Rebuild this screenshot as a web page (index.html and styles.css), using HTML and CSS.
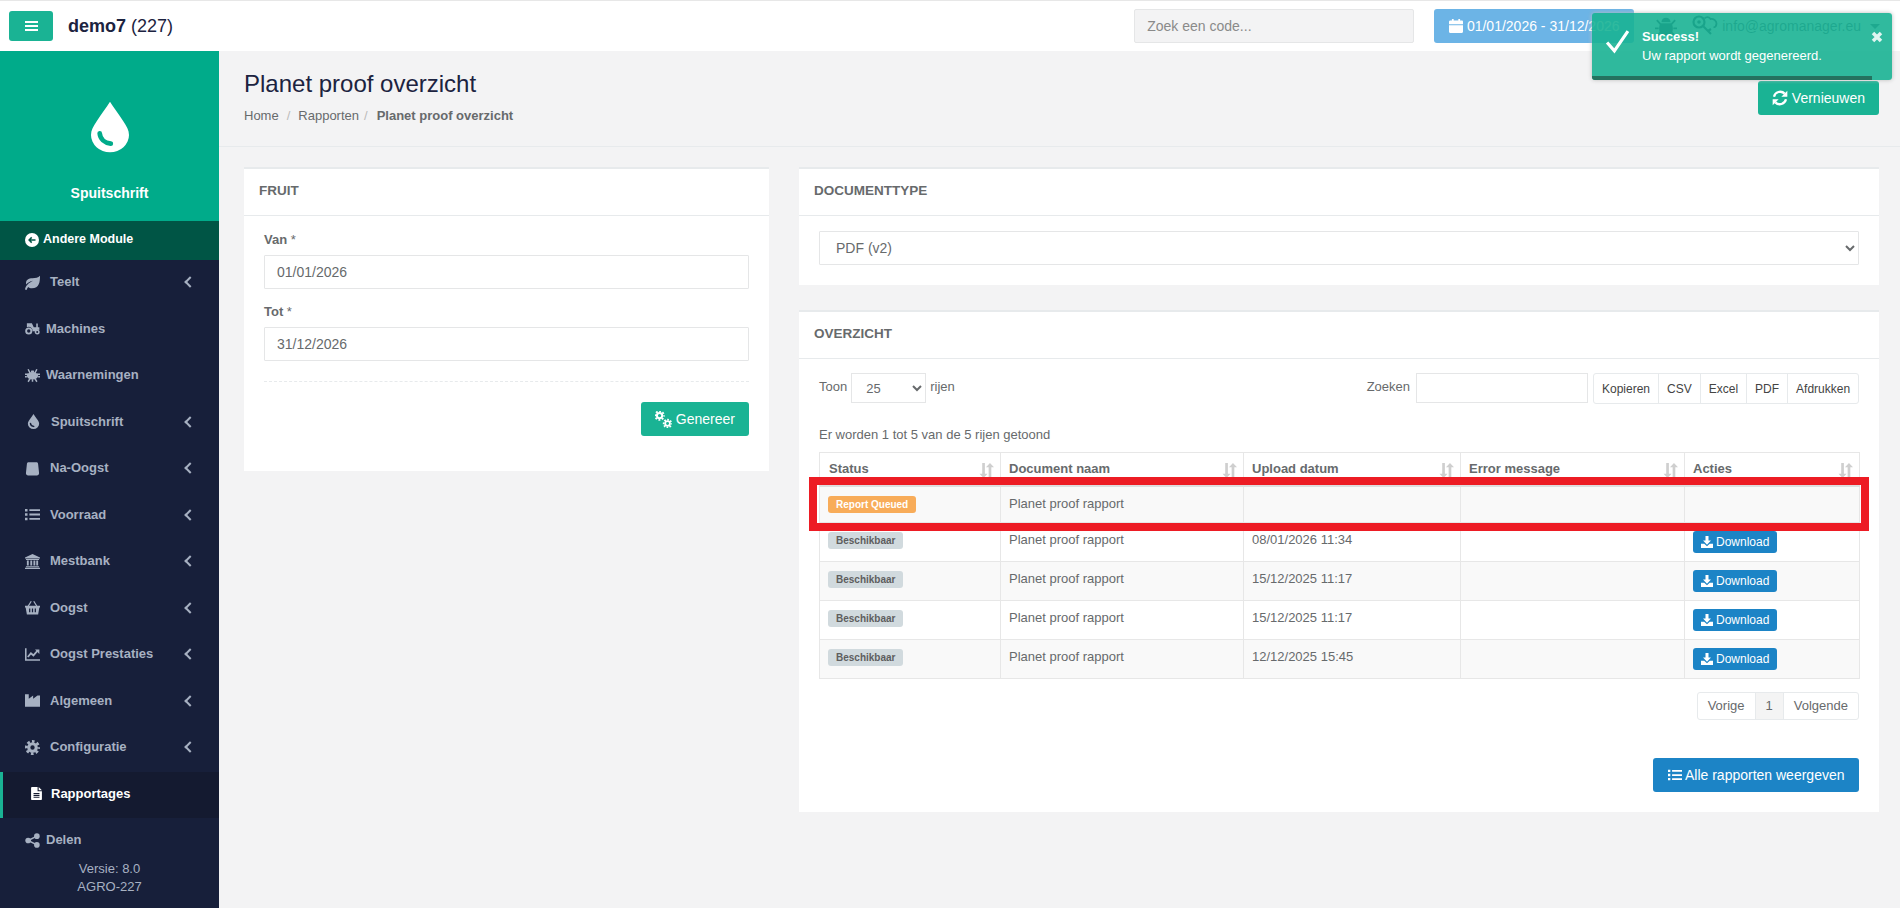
FILE: index.html
```html
<!DOCTYPE html>
<html>
  <head>
    <title>Planet proof overzicht</title>
    <link rel="stylesheet" href="styles.css">
  </head>
  <body>
    <svg class="icon-defs" xmlns="http://www.w3.org/2000/svg">
      <symbol id="i-drop" viewBox="0 0 24 32">
        <path fill="currentColor" d="M12 0c2 3.500 5.500 7.500 8.500 12.500 2 3 3.500 5.500 3.500 8.500a12 11 0 0 1-24 0c0-3 1.500-5.500 3.500-8.500C6.500 7.500 10 3.500 12 0z"/>
        <path fill="none" stroke="var(--cut)" stroke-width="3" stroke-linecap="round" d="M5.500 20c.3 3.500 3 6 7 6.500"/>
      </symbol>
      <symbol id="i-back" viewBox="0 0 24 24">
        <circle cx="12" cy="12" r="12" fill="currentColor"/>
        <path fill="none" stroke="var(--cut)" stroke-width="2.500" d="M18 12H7m4.500-4.500L7 12l4.500 4.500"/>
      </symbol>
      <symbol id="i-leaf" viewBox="0 0 24 24">
        <path fill="currentColor" d="M24 1c0 10-1 20-13 20-2.500 0-4.500-.7-6-2-1 1.300-2 3-2.500 5L0 23c1-6 6-11 13-14-5 1-9 3-11 6C0 8 6 5 12 5c5 0 9-1 12-4z"/>
      </symbol>
      <symbol id="i-tractor" viewBox="0 0 24 20">
        <circle cx="6" cy="14" r="4.200" fill="none" stroke="currentColor" stroke-width="3"/>
        <circle cx="19.500" cy="15.500" r="2.800" fill="none" stroke="currentColor" stroke-width="2.400"/>
        <path fill="currentColor" d="M3 8V1.500h8l3 6.500h4V2h2.500v6H23v4.500a5 5 0 0 0-6.500 2H12a6.200 6.200 0 0 0-9-6.500z"/>
      </symbol>
      <symbol id="i-bug" viewBox="0 0 24 24">
        <path fill="currentColor" d="M7 8c0-3 2-5 5-5s5 2 5 5zM6 9h12c1 2 1.500 3.500 1.500 6 0 4.500-3 8-7.500 8s-7.500-3.500-7.500-8c0-2.500.5-4 1.500-6z"/>
        <path fill="none" stroke="currentColor" stroke-width="2" d="M6 10L2 5.500M18 10l4-4.500M4 14.500H0M20 14.500h4M6 19l-4 4M18 19l4 4"/>
      </symbol>
      <symbol id="i-fly" viewBox="0 0 24 24">
        <ellipse cx="12" cy="12.500" rx="9" ry="6" fill="currentColor"/>
        <path fill="currentColor" d="M9 7h6l-1-3h-4z"/>
        <path fill="none" stroke="currentColor" stroke-width="2.400" d="M8 8L5 2M16 8l3-6M5 10H0v-1M19 10h5V9M3 14H0M21 14h3M8 17l-3 5M16 17l3 5M12 18v4"/>
      </symbol>
      <symbol id="i-bag" viewBox="0 0 24 24">
        <path fill="currentColor" d="M6 2h12c2 0 2.800 1 3 3l1.500 14c.2 2.500-1.500 4-3.500 4H5c-2 0-3.700-1.500-3.500-4L3 5c.2-2 1-3 3-3z"/>
      </symbol>
      <symbol id="i-list" viewBox="0 0 24 20">
        <path fill="currentColor" d="M0 1h4v4H0zM0 8h4v4H0zM0 15h4v4H0zM7 1.500h17v3H7zM7 8.500h17v3H7zM7 15.500h17v3H7z"/>
      </symbol>
      <symbol id="i-bank" viewBox="0 0 24 24">
        <path fill="currentColor" d="M12 0l12 5.500V7H0V5.500zM1.500 8h21v1.500h-21zM3 10.500h3v8H3zM8.500 10.500h3v8h-3zM13.500 10.500h3v8h-3zM18 10.500h3v8h-3zM1.500 19.500h21V21h-21zM0 22h24v2H0z"/>
      </symbol>
      <symbol id="i-basket" viewBox="0 0 24 22">
        <path fill="none" stroke="currentColor" stroke-width="2" d="M5 9l5-8M19 9l-5-8"/>
        <path fill="currentColor" fill-rule="evenodd" d="M0 8h24v3h-1l-2 11H3L1 11H0zM6.500 12.500v6h2v-6zM11 12.500v6h2v-6zM15.500 12.500v6h2v-6z"/>
      </symbol>
      <symbol id="i-chart" viewBox="0 0 24 20">
        <path fill="currentColor" d="M0 0h2.500v17.500H24V20H0z"/>
        <path fill="none" stroke="currentColor" stroke-width="3" d="M4.500 14l5-6 4 3.500L20 4"/>
        <path fill="currentColor" d="M16 2h7v7z"/>
      </symbol>
      <symbol id="i-factory" viewBox="0 0 24 20">
        <path fill="currentColor" d="M0 0h6v7l7-5v5l7-5h4v18H0z"/>
      </symbol>
      <symbol id="i-cog" viewBox="0 0 24 24">
        <circle cx="12" cy="12" r="6" fill="none" stroke="currentColor" stroke-width="5"/>
        <circle cx="12" cy="12" r="9.800" fill="none" stroke="currentColor" stroke-width="4.400" stroke-dasharray="4.200 3.500" stroke-dashoffset="2.100"/>
      </symbol>
      <symbol id="i-file" viewBox="0 0 20 24">
        <path fill="currentColor" fill-rule="evenodd" d="M2 0h10v8h8v14c0 1.200-.8 2-2 2H2c-1.200 0-2-.8-2-2V2C0 .800.800 0 2 0zM14 0l6 6h-6zM4.500 11v2h11v-2zM4.500 14.500v2h11v-2zM4.500 18v2h11v-2z"/>
      </symbol>
      <symbol id="i-share" viewBox="0 0 24 24">
        <circle cx="19" cy="5" r="4.500" fill="currentColor"/>
        <circle cx="5" cy="12" r="4.500" fill="currentColor"/>
        <circle cx="19" cy="19" r="4.500" fill="currentColor"/>
        <path fill="none" stroke="currentColor" stroke-width="2.500" d="M19 5L5 12l14 7"/>
      </symbol>
      <symbol id="i-calendar" viewBox="0 0 24 24">
        <path fill="currentColor" d="M5 0h3v4H5zM16 0h3v4h-3zM3 2.500h19c1.200 0 2 .8 2 2V9H0V4.500c0-1.200 1.200-2 3-2zM0 10.500h24V22c0 1.200-.8 2-2 2H2c-1.200 0-2-.8-2-2z"/>
      </symbol>
      <symbol id="i-key" viewBox="0 0 26 22">
        <circle cx="7" cy="7" r="5.500" fill="none" stroke="currentColor" stroke-width="2.200"/>
        <circle cx="7" cy="7" r="1.800" fill="currentColor"/>
        <path fill="none" stroke="currentColor" stroke-width="2.200" d="M11 11l8 8m-3-3l3-2"/>
        <path fill="none" stroke="currentColor" stroke-width="1.800" d="M12.500 3.500c1.500-2 5-2 6 .5 3-.5 6 1.500 6 4.500 0 2-1 3.500-3 4"/>
      </symbol>
      <symbol id="i-refresh" viewBox="0 0 24 24">
        <path fill="none" stroke="currentColor" stroke-width="3.400" d="M3 10a9.500 9.500 0 0 1 16-4.500M21 14a9.500 9.500 0 0 1-16 4.500"/>
        <path fill="currentColor" d="M23 1v9h-9zM1 23v-9h9z"/>
      </symbol>
      <symbol id="i-cogs" viewBox="0 0 24 24">
        <g transform="translate(-1 -1) scale(.62)">
          <circle cx="12" cy="12" r="6" fill="none" stroke="currentColor" stroke-width="4.500"/>
          <circle cx="12" cy="12" r="9.800" fill="none" stroke="currentColor" stroke-width="4.400" stroke-dasharray="4.200 3.500" stroke-dashoffset="2.100"/>
        </g>
        <g transform="translate(11 11) scale(.56)">
          <circle cx="12" cy="12" r="6" fill="none" stroke="currentColor" stroke-width="4.500"/>
          <circle cx="12" cy="12" r="9.800" fill="none" stroke="currentColor" stroke-width="4.400" stroke-dasharray="4.200 3.500" stroke-dashoffset="2.100"/>
        </g>
      </symbol>
      <symbol id="i-download" viewBox="0 0 24 24">
        <path fill="currentColor" d="M9 0h6v9h5l-8 8.500L4 9h5zM0 15.500h6.500l5.500 5 5.500-5H24V24H0z"/>
      </symbol>
      <symbol id="i-sort" viewBox="0 0 14 14">
        <path fill="#cfcfcf" d="M3 0h2.500v10H8l-3.750 4L.5 10H3zM9 14V4H6.500l3.750-4L14 4h-2.500v10z"/>
      </symbol>
    </svg>

    <header class="topbar">
      <button class="menu-toggle">
        <span></span><span></span><span></span>
      </button>
      <div class="account"><strong>demo7</strong> (227)</div>
      <input class="code-search" type="text" placeholder="Zoek een code...">
      <button class="date-range">
        <svg class="icon i14"><use href="#i-calendar"/></svg>
        01/01/2026 - 31/12/2026
      </button>
      <svg class="top-bug"><use href="#i-bug"/></svg>
      <svg class="top-key"><use href="#i-key"/></svg>
      <span class="user-mail">info@agromanager.eu</span>
      <span class="caret"></span>
    </header>

    <div class="toast">
      <svg class="toast-check" viewBox="0 0 24 24"><path d="M2 13l7 8L22 2"/></svg>
      <div class="toast-text">
        <div class="toast-title">Success!</div>
        <div>Uw rapport wordt gegenereerd.</div>
      </div>
      <svg class="toast-close" viewBox="0 0 12 12"><path d="M2 2l8 8M10 2l-8 8"/></svg>
      <div class="toast-progress"></div>
    </div>

    <div class="wrapper">
      <nav class="sidebar">
        <div class="module-head">
          <svg class="module-drop"><use href="#i-drop"/></svg>
          <div class="module-name">Spuitschrift</div>
        </div>
        <a class="other-module">
          <svg class="icon i14"><use href="#i-back"/></svg>
          Andere Module
        </a>
        <ul class="side-menu">
          <li><svg class="side-icon"><use href="#i-leaf"/></svg><span class="side-label">Teelt</span><i class="chevron"></i></li>
          <li class="tight"><svg class="side-icon"><use href="#i-tractor"/></svg><span class="side-label">Machines</span></li>
          <li class="tight"><svg class="side-icon"><use href="#i-fly"/></svg><span class="side-label">Waarnemingen</span></li>
          <li class="wide"><svg class="side-icon"><use href="#i-drop"/></svg><span class="side-label">Spuitschrift</span><i class="chevron"></i></li>
          <li><svg class="side-icon"><use href="#i-bag"/></svg><span class="side-label">Na-Oogst</span><i class="chevron"></i></li>
          <li><svg class="side-icon"><use href="#i-list"/></svg><span class="side-label">Voorraad</span><i class="chevron"></i></li>
          <li><svg class="side-icon"><use href="#i-bank"/></svg><span class="side-label">Mestbank</span><i class="chevron"></i></li>
          <li><svg class="side-icon"><use href="#i-basket"/></svg><span class="side-label">Oogst</span><i class="chevron"></i></li>
          <li><svg class="side-icon"><use href="#i-chart"/></svg><span class="side-label">Oogst Prestaties</span><i class="chevron"></i></li>
          <li><svg class="side-icon"><use href="#i-factory"/></svg><span class="side-label">Algemeen</span><i class="chevron"></i></li>
          <li><svg class="side-icon"><use href="#i-cog"/></svg><span class="side-label">Configuratie</span><i class="chevron"></i></li>
          <li class="active"><svg class="side-icon"><use href="#i-file"/></svg><span class="side-label">Rapportages</span></li>
          <li class="tight"><svg class="side-icon"><use href="#i-share"/></svg><span class="side-label">Delen</span></li>
        </ul>
        <div class="version">Versie: 8.0<br>AGRO-227</div>
      </nav>

      <main class="page">
        <div class="page-heading">
          <div>
            <h2 class="page-title">Planet proof overzicht</h2>
            <ol class="breadcrumb">
              <li>Home</li>
              <li class="sep first">/</li>
              <li>Rapporten</li>
              <li class="sep">/</li>
              <li><strong>Planet proof overzicht</strong></li>
            </ol>
          </div>
          <button class="btn btn-green btn-refresh">
            <svg class="icon i16"><use href="#i-refresh"/></svg> Vernieuwen
          </button>
        </div>

        <div class="content">
          <section class="card">
            <h5 class="card-title">FRUIT</h5>
            <div class="card-body fruit-body">
              <label class="field-label"><strong>Van</strong> *</label>
              <input class="field" type="text" value="01/01/2026">
              <label class="field-label second"><strong>Tot</strong> *</label>
              <input class="field" type="text" value="31/12/2026">
              <div class="dashed"></div>
              <div class="form-actions">
                <button class="btn btn-green btn-generate">
                  <svg class="icon i17"><use href="#i-cogs"/></svg> Genereer
                </button>
              </div>
            </div>
          </section>

          <div class="right-col">
            <section class="card">
              <h5 class="card-title">DOCUMENTTYPE</h5>
              <div class="card-body doc-body">
                <select class="field doc-select"><option>PDF (v2)</option></select>
              </div>
            </section>

            <section class="card">
              <h5 class="card-title">OVERZICHT</h5>
              <div class="card-body overview-body">
                <div class="toolbar">
                  <div class="length">
                    Toon
                    <select class="length-select"><option>25</option></select>
                    rijen
                  </div>
                  <div class="toolbar-right">
                    <span class="search-label">Zoeken</span>
                    <input class="table-search" type="text">
                    <div class="export-group">
                      <span>Kopieren</span><span>CSV</span><span>Excel</span><span>PDF</span><span>Afdrukken</span>
                    </div>
                  </div>
                </div>

                <div class="table-info">Er worden 1 tot 5 van de 5 rijen getoond</div>

                <div class="table-wrap">
                  <table class="reports">
                    <thead>
                      <tr>
                        <th class="col-status">Status<svg class="sort"><use href="#i-sort"/></svg></th>
                        <th class="col-name">Document naam<svg class="sort"><use href="#i-sort"/></svg></th>
                        <th class="col-date">Upload datum<svg class="sort"><use href="#i-sort"/></svg></th>
                        <th class="col-error">Error message<svg class="sort"><use href="#i-sort"/></svg></th>
                        <th class="col-actions">Acties<svg class="sort"><use href="#i-sort"/></svg></th>
                      </tr>
                    </thead>
                    <tbody>
                      <tr class="queued">
                        <td><span class="tag tag-orange">Report Queued</span></td>
                        <td>Planet proof rapport</td>
                        <td></td>
                        <td></td>
                        <td></td>
                      </tr>
                      <tr>
                        <td><span class="tag">Beschikbaar</span></td>
                        <td>Planet proof rapport</td>
                        <td>08/01/2026 11:34</td>
                        <td></td>
                        <td><button class="btn-download"><svg class="icon i12"><use href="#i-download"/></svg> Download</button></td>
                      </tr>
                      <tr>
                        <td><span class="tag">Beschikbaar</span></td>
                        <td>Planet proof rapport</td>
                        <td>15/12/2025 11:17</td>
                        <td></td>
                        <td><button class="btn-download"><svg class="icon i12"><use href="#i-download"/></svg> Download</button></td>
                      </tr>
                      <tr>
                        <td><span class="tag">Beschikbaar</span></td>
                        <td>Planet proof rapport</td>
                        <td>15/12/2025 11:17</td>
                        <td></td>
                        <td><button class="btn-download"><svg class="icon i12"><use href="#i-download"/></svg> Download</button></td>
                      </tr>
                      <tr>
                        <td><span class="tag">Beschikbaar</span></td>
                        <td>Planet proof rapport</td>
                        <td>12/12/2025 15:45</td>
                        <td></td>
                        <td><button class="btn-download"><svg class="icon i12"><use href="#i-download"/></svg> Download</button></td>
                      </tr>
                    </tbody>
                  </table>
                  <div class="red-mark"></div>
                </div>

                <div class="pager-row">
                  <div class="pager">
                    <span class="pager-prev">Vorige</span><span class="pager-current">1</span><span class="pager-next">Volgende</span>
                  </div>
                </div>

                <div class="all-row">
                  <button class="btn btn-blue">
                    <svg class="icon i14"><use href="#i-list"/></svg> Alle rapporten weergeven
                  </button>
                </div>
              </div>
            </section>
          </div>
        </div>
      </main>
    </div>
  </body>
</html>
```

FILE: styles.css
```css
* {
  box-sizing: border-box;
}
html, body {
  margin: 0;
  height: 908px;
  overflow: hidden;
}
body {
  background-color: #f3f3f4;
  color: #676a6c;
  font-family: "Liberation Sans", Arial, sans-serif;
  font-size: 13px;
  line-height: 18.5px;
}
button, input, select {
  font-family: inherit;
}
.icon-defs {
  display: none;
}
.icon {
  display: inline-block;
  vertical-align: -2px;
  color: inherit;
}
.i12 { width: 12px; height: 12px; }
.i14 { width: 14px; height: 14px; }
.i16 { width: 16px; height: 16px; vertical-align: -3px; }
.i17 { width: 17px; height: 17px; vertical-align: -4px; }

/* top bar */
.topbar {
  height: 51px;
  background-color: white;
  border-top: 1px solid #e7e7e7;
  display: flex;
  align-items: center;
  padding: 0 20px 0 9px;
  color: #1c2340;
}
.menu-toggle {
  width: 44px;
  height: 30px;
  background-color: #1ab394;
  border: none;
  border-radius: 3px;
  display: flex;
  flex-direction: column;
  align-items: center;
  justify-content: center;
  gap: 2px;
  padding: 0;
}
.menu-toggle span {
  width: 13px;
  height: 2px;
  background-color: white;
}
.account {
  font-size: 18px;
  margin-left: 15px;
  margin-right: auto;
}
.code-search {
  width: 280px;
  height: 34px;
  background-color: #f3f3f4;
  border: 1px solid #e5e6e7;
  border-radius: 2px;
  padding: 6px 12px;
  font-size: 14px;
}
.code-search::placeholder {
  color: #8a8a8a;
}
.date-range {
  width: 200px;
  height: 34px;
  margin-left: 20px;
  margin-right: 21px;
  background-color: #6cb4e6;
  color: white;
  border: none;
  border-radius: 3px;
  font-size: 14px;
  white-space: nowrap;
}
.top-bug {
  width: 22px;
  height: 24px;
  color: #1c2340;
  margin-right: 15px;
}
.top-key {
  width: 26px;
  height: 24px;
  color: #1c2340;
  margin-right: 4px;
}
.user-mail {
  font-size: 14px;
  color: #1c2340;
  opacity: .8;
}
.caret {
  width: 0;
  height: 0;
  margin-left: 9px;
  border-left: 5px solid transparent;
  border-right: 5px solid transparent;
  border-top: 5px solid #1c2340;
  opacity: .8;
}

/* success toast */
.toast {
  position: absolute;
  top: 13px;
  right: 8px;
  width: 300px;
  height: 67px;
  background-color: rgba(26, 179, 148, .9);
  border-radius: 3px;
  box-shadow: 0 0 4px #bbb;
  color: white;
  overflow: hidden;
}
.toast-check {
  position: absolute;
  left: 13px;
  top: 16px;
  width: 25px;
  height: 25px;
  fill: none;
  stroke: white;
  stroke-width: 3px;
}
.toast-text {
  position: absolute;
  left: 50px;
  top: 14px;
  line-height: 19px;
}
.toast-title {
  font-weight: bold;
}
.toast-close {
  position: absolute;
  right: 9px;
  top: 18px;
  width: 12px;
  height: 12px;
  fill: none;
  stroke: #dff5f0;
  stroke-width: 3.5px;
}
.toast-progress {
  position: absolute;
  left: 0;
  bottom: 0;
  width: 280px;
  height: 4px;
  background-color: #24725f;
}

/* layout */
.wrapper {
  display: flex;
  height: 857px;
}
.sidebar {
  width: 219px;
  flex: none;
  background-color: #171f3a;
  color: #a7b1c2;
}
.module-head {
  height: 170px;
  background-color: #00ab8a;
  --cut: #00ab8a;
  color: white;
  display: flex;
  flex-direction: column;
  align-items: center;
  padding-top: 50px;
}
.module-drop {
  width: 38px;
  height: 52px;
}
.module-name {
  font-size: 14px;
  font-weight: bold;
  margin-top: 31px;
}
.other-module {
  height: 39px;
  padding-bottom: 2px;
  background-color: #005545;
  --cut: #005545;
  color: white;
  font-size: 12.5px;
  font-weight: bold;
  display: flex;
  align-items: center;
  gap: 4px;
  padding-left: 25px;
}
.side-menu {
  list-style: none;
  margin: 0;
  padding: 0;
  --cut: #171f3a;
}
.side-menu li {
  height: 46.5px;
  display: flex;
  align-items: center;
  padding: 0 25px 2px;
}
.side-icon {
  width: 15px;
  height: 15px;
  flex: none;
  margin-right: 10px;
}
.tight .side-icon {
  margin-right: 6px;
}
.wide .side-icon {
  width: 13px;
  margin-left: 2px;
  margin-right: 11px;
}
.side-label {
  font-weight: bold;
  flex: 1;
}
.chevron {
  width: 8px;
  height: 8px;
  border-left: 2px solid #a7b1c2;
  border-bottom: 2px solid #a7b1c2;
  transform: rotate(45deg);
}
.side-menu .active {
  background-color: #141a30;
  border-left: 3px solid #1ab394;
  color: white;
  --cut: #141a30;
  padding-left: 28px;
}
.active .side-icon {
  width: 11px;
  height: 13px;
  margin-right: 9px;
}
.version {
  margin-top: -5px;
  text-align: center;
  line-height: 18px;
}

.page {
  flex: 1;
}
.page-heading {
  height: 96px;
  padding: 19px 21px 0 25px;
  border-bottom: 1px solid #e7eaec;
  display: flex;
  justify-content: space-between;
  align-items: flex-start;
}
.page-heading .btn {
  margin-top: 11px;
}
.btn-refresh {
  width: 121px;
  padding: 0;
}
.page-title {
  font-size: 24px;
  font-weight: normal;
  line-height: 28px;
  margin: 0;
  color: #1c2340;
}
.breadcrumb {
  list-style: none;
  display: flex;
  margin: 9px 0 0;
  padding: 0;
}
.sep {
  color: #bbb;
  margin: 0 9px 0 5px;
}
.sep.first {
  margin: 0 8px;
}

.content {
  display: grid;
  grid-template-columns: 525px 1080px;
  gap: 30px;
  padding: 20px 0 0 25px;
  align-items: start;
}
.right-col {
  display: flex;
  flex-direction: column;
  gap: 25px;
}
.card {
  background-color: white;
  border-top: 2px solid #e7eaec;
}
.card-title {
  margin: 0;
  height: 47px;
  line-height: 44px;
  padding-left: 15px;
  font-size: 13.5px;
  font-weight: bold;
  border-bottom: 1px solid #e7eaec;
}
.card-body {
  padding: 15px 20px 20px;
}

/* fruit form */
.fruit-body {
  padding-top: 16px;
  padding-bottom: 35px;
}
.field-label {
  display: block;
  height: 18px;
  line-height: 16px;
  margin-bottom: 5px;
}
.field-label.second {
  margin-top: 15px;
}
.field {
  display: block;
  width: 100%;
  height: 34px;
  border: 1px solid #e5e6e7;
  border-radius: 1px;
  padding: 6px 12px;
  font-size: 14px;
  color: #676a6c;
  background-color: white;
}
.dashed {
  border-top: 1px dashed #e7eaec;
  margin: 20px 0;
}
.form-actions {
  display: flex;
  justify-content: flex-end;
}
.btn {
  height: 34px;
  border: none;
  border-radius: 3px;
  color: white;
  font-size: 14px;
  padding: 0 13px;
}
.btn-green {
  background-color: #1ab394;
}
.btn-generate {
  padding: 0 14px;
}
.btn-blue {
  background-color: #1c84c6;
  padding: 0 14.500px;
}

/* overview table */
.overview-body {
  padding-top: 14px;
}
.toolbar {
  display: flex;
  justify-content: space-between;
  align-items: flex-start;
  height: 30px;
}
.length {
  display: flex;
  gap: 4px;
  align-items: flex-start;
  line-height: 28px;
}
.length-select {
  width: 75px;
  height: 30px;
  border: 1px solid #e5e6e7;
  background-color: white;
  color: #676a6c;
  font-size: 13px;
  padding-left: 10px;
}
.toolbar-right {
  display: flex;
  align-items: flex-start;
}
.search-label {
  line-height: 28px;
  margin-right: 6px;
}
.table-search {
  width: 172px;
  height: 30px;
  border: 1px solid #e5e6e7;
}
.export-group {
  display: flex;
  margin-left: 5px;
  height: 31px;
  width: 266px;
  border: 1px solid #e7eaec;
  border-radius: 3px;
  color: #444;
  font-size: 12px;
  line-height: 30px;
}
.export-group span {
  padding: 0 8px;
  border-right: 1px solid #e7eaec;
  white-space: nowrap;
}
.export-group span:last-child {
  border-right: none;
}
.table-info {
  margin-top: 23px;
}
.table-wrap {
  position: relative;
  margin-top: 7px;
}
.reports {
  width: 100%;
  border-collapse: collapse;
  table-layout: fixed;
}
.col-status { width: 181px; }
.col-name { width: 243px; }
.col-date { width: 217px; }
.col-error { width: 224px; }
.col-actions { width: 175px; }
.reports th {
  position: relative;
  height: 34px;
  text-align: left;
  padding: 7px 8px;
  border: 1px solid #e7e7e7;
  border-bottom: 2px solid #dedede;
}
.reports th.col-status {
  padding-left: 9px;
}
.sort {
  position: absolute;
  right: 6px;
  top: 10px;
  width: 15px;
  height: 15px;
}
.reports td {
  height: 39px;
  padding: 8px;
  border: 1px solid #e7e7e7;
  vertical-align: top;
}
.reports tr.queued td {
  height: 36px;
}
.reports tbody tr:nth-child(odd) {
  background-color: #f9f9f9;
}
.tag {
  display: inline-block;
  height: 17px;
  padding: 0 8px;
  background-color: #d1dade;
  color: #5e5e5e;
  border-radius: 3px;
  font-size: 10px;
  font-weight: bold;
  line-height: 17px;
  vertical-align: top;
  margin-top: 1px;
}
.tag-orange {
  background-color: #f8ac59;
  color: white;
}
.btn-download {
  display: block;
  height: 22px;
  width: 84px;
  padding: 0;
  background-color: #1c84c6;
  border: none;
  border-radius: 3px;
  color: white;
  font-size: 12px;
}
.red-mark {
  position: absolute;
  left: -10px;
  right: -10px;
  top: 25px;
  height: 54px;
  border: 8px solid #ed1c24;
}
.pager-row {
  display: flex;
  justify-content: flex-end;
  margin-top: 13px;
}
.pager {
  display: flex;
  height: 28px;
  border: 1px solid #e7eaec;
  border-radius: 3px;
  line-height: 26px;
}
.pager span {
  padding: 0 10px;
}
.pager-current {
  background-color: #f4f4f4;
  border-left: 1px solid #e7eaec;
  border-right: 1px solid #e7eaec;
}
.all-row {
  display: flex;
  justify-content: flex-end;
  margin-top: 38px;
}
```
